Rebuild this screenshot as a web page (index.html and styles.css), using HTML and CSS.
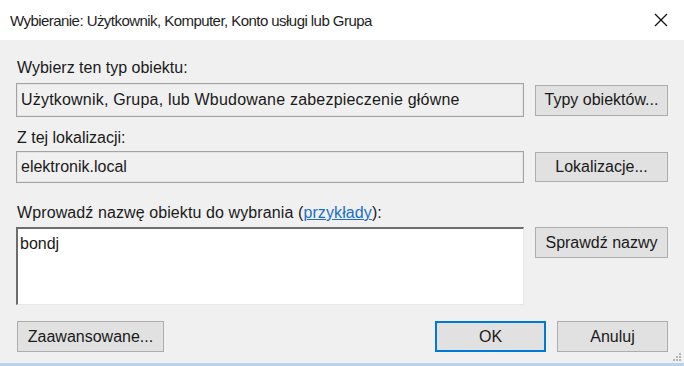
FILE: index.html
```html
<!DOCTYPE html>
<html lang="pl">
<head>
<meta charset="utf-8">
<link rel="stylesheet" href="styles.css">
</head>
<body>
<div class="dialog">
  <div class="titlebar">
    <span class="title">Wybieranie: Użytkownik, Komputer, Konto usługi lub Grupa</span>
    <svg class="close" width="14" height="14" viewBox="0 0 14 14"><path d="M1 1 L13 13 M13 1 L1 13" stroke="#111" stroke-width="1.3" fill="none"/></svg>
  </div>
  <div class="content">
    <div class="label l1">Wybierz ten typ obiektu:</div>
    <div class="row r1">
      <div class="field">Użytkownik, Grupa, lub Wbudowane zabezpieczenie główne</div>
      <button class="btn">Typy obiektów...</button>
    </div>
    <div class="label l2">Z tej lokalizacji:</div>
    <div class="row r2">
      <div class="field">elektronik.local</div>
      <button class="btn">Lokalizacje...</button>
    </div>
    <div class="label l3">Wprowadź nazwę obiektu do wybrania (<span class="link">przykłady</span>):</div>
    <div class="row r3">
      <div class="area">bondj</div>
      <button class="btn">Sprawdź nazwy</button>
    </div>
    <div class="footer">
      <button class="btn adv">Zaawansowane...</button>
      <div class="actions">
        <button class="btn ok">OK</button>
        <button class="btn">Anuluj</button>
      </div>
    </div>
    <svg class="grip" width="10" height="10" viewBox="0 0 10 10">
      <rect x="8" y="2" width="2" height="2" fill="#b5b5b5"/>
      <rect x="5" y="5" width="2" height="2" fill="#b5b5b5"/>
      <rect x="8" y="5" width="2" height="2" fill="#b5b5b5"/>
      <rect x="2" y="8" width="2" height="2" fill="#b5b5b5"/>
      <rect x="5" y="8" width="2" height="2" fill="#b5b5b5"/>
      <rect x="8" y="8" width="2" height="2" fill="#b5b5b5"/>
    </svg>
  </div>
  <div class="edge"></div>
</div>
</body>
</html>
```
FILE: styles.css
```css
html, body {
  margin: 0;
  padding: 0;
  background: #f0f0f0;
}
.dialog {
  width: 684px;
  height: 366px;
  display: flex;
  flex-direction: column;
  font-family: "Liberation Sans", Arial, sans-serif;
  color: #1a1a1a;
}
.titlebar {
  height: 40px;
  background: #ffffff;
  display: flex;
  align-items: center;
  justify-content: space-between;
  padding: 0 16px 0 10px;
  box-sizing: border-box;
}
.title {
  font-size: 15px;
  letter-spacing: -0.55px;
  color: #1e1e1e;
}
.close {
  display: block;
}
.content {
  flex: 1;
  position: relative;
  background: #f0f0f0;
  padding: 19px 16px 0 16px;
  box-sizing: border-box;
}
.label {
  font-size: 16px;
  line-height: 18px;
  padding-left: 1px;
}
.l1 { margin-bottom: 6px; }
.l2 { margin-top: 12px; margin-bottom: 4px; }
.l3 { margin-top: 21px; margin-bottom: 5px; }
.row {
  display: grid;
  grid-template-columns: 508px 133px;
  column-gap: 11px;
  align-items: center;
}
.r3 { align-items: start; }
.field {
  height: 34px;
  box-sizing: border-box;
  border: 1px solid #a3a3a3;
  box-shadow: inset 0 0 0 1px #e4e4e4;
  background: #f0f0f0;
  font-size: 16px;
  letter-spacing: 0.2px;
  display: flex;
  align-items: center;
  padding-left: 4px;
}
.r2 .field { height: 32px; letter-spacing: 0; }
.area {
  height: 78px;
  box-sizing: border-box;
  background: #fff;
  border-top: 2px solid #6d6d6d;
  border-left: 2px solid #6d6d6d;
  border-right: 1px solid #e6e6e6;
  border-bottom: 1px solid #e6e6e6;
  font-size: 16px;
  padding: 6px 2px;
}
.btn {
  height: 31px;
  box-sizing: border-box;
  background: #e1e1e1;
  border: 1px solid #adadad;
  font-family: "Liberation Sans", Arial, sans-serif;
  font-size: 16px;
  color: #1a1a1a;
  padding: 0;
}
.r2 .btn { height: 30px; }
.l3 { letter-spacing: 0.1px; }
.link {
  color: #1c6fc8;
  text-decoration: underline;
}
.footer {
  margin-top: 16px;
  display: flex;
  justify-content: space-between;
  align-items: center;
  padding-left: 1px;
}
.adv { width: 147px; }
.actions {
  display: flex;
  gap: 11px;
}
.actions .btn { width: 111px; height: 31px; }
.ok {
  border: 2px solid #0078d7;
}
.grip {
  position: absolute;
  right: 3px;
  bottom: 2px;
}
.edge {
  height: 3px;
  background: #b9d4ea;
}
```
